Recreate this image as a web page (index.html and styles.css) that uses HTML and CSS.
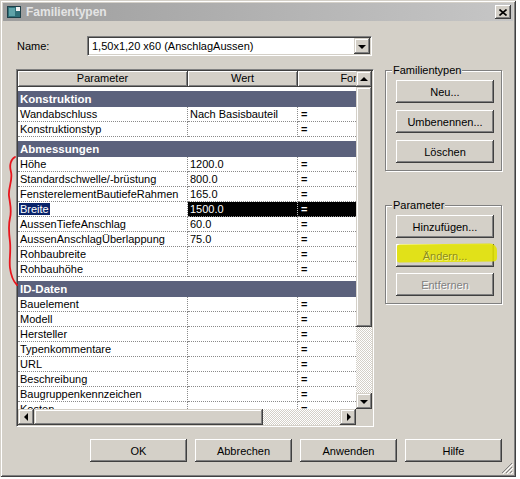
FILE: index.html
```html
<!DOCTYPE html>
<html lang="de">
<head>
    <meta charset="UTF-8">
    <title>Familientypen</title>
    <link rel="stylesheet" href="styles.css">
</head>
<body>
    <div class="window">
        <!-- Titelleiste -->
        <div class="titlebar">
            <svg class="app-icon" width="14" height="12" viewBox="0 0 14 12">
                <rect x="0.5" y="0.5" width="13" height="11" fill="#2f6f78" stroke="#1d3f48"/>
                <rect x="2" y="2" width="6" height="8" fill="#5fa3a8"/>
                <rect x="9" y="1" width="4" height="4" fill="#f2f2f2"/>
            </svg>
            <span class="title">Familientypen</span>
            <span class="close">
                <svg width="8" height="7" viewBox="0 0 8 7">
                    <path d="M0.5 0.5 L7.5 6.5 M7.5 0.5 L0.5 6.5" stroke="#000" stroke-width="1.6"/>
                </svg>
            </span>
        </div>

        <div class="content">
            <div class="name-row">
                <span class="name-label">Name:</span>
                <div class="combo">
                    <span class="combo-text">1,50x1,20 x60 (AnschlagAussen)</span>
                    <span class="sbtn combo-btn"><i class="tri tri-down"></i></span>
                </div>
            </div>

            <div class="main-row">
                <!-- Parametertabelle -->
                <div class="grid-frame">
                    <div class="sheet">
                        <div class="row head">
                            <div class="c c-param">Parameter</div>
                            <div class="c c-value">Wert</div>
                            <div class="c c-formula">Formel</div>
                        </div>

                        <div class="group">Konstruktion</div>
                        <div class="row"><div class="c c-param">Wandabschluss</div><div class="c c-value">Nach Basisbauteil</div><div class="c c-formula">=</div></div>
                        <div class="row"><div class="c c-param">Konstruktionstyp</div><div class="c c-value"></div><div class="c c-formula">=</div></div>

                        <div class="group">Abmessungen</div>
                        <div class="row"><div class="c c-param">Höhe</div><div class="c c-value">1200.0</div><div class="c c-formula">=</div></div>
                        <div class="row"><div class="c c-param">Standardschwelle/-brüstung</div><div class="c c-value">800.0</div><div class="c c-formula">=</div></div>
                        <div class="row"><div class="c c-param">FensterelementBautiefeRahmen</div><div class="c c-value">165.0</div><div class="c c-formula">=</div></div>
                        <div class="row selected"><div class="c c-param"><span class="sel-text">Breite</span></div><div class="c c-value">1500.0</div><div class="c c-formula">=</div></div>
                        <div class="row"><div class="c c-param">AussenTiefeAnschlag</div><div class="c c-value">60.0</div><div class="c c-formula">=</div></div>
                        <div class="row"><div class="c c-param">AussenAnschlagÜberlappung</div><div class="c c-value">75.0</div><div class="c c-formula">=</div></div>
                        <div class="row"><div class="c c-param">Rohbaubreite</div><div class="c c-value"></div><div class="c c-formula">=</div></div>
                        <div class="row"><div class="c c-param">Rohbauhöhe</div><div class="c c-value"></div><div class="c c-formula">=</div></div>

                        <div class="group">ID-Daten</div>
                        <div class="row"><div class="c c-param">Bauelement</div><div class="c c-value"></div><div class="c c-formula">=</div></div>
                        <div class="row"><div class="c c-param">Modell</div><div class="c c-value"></div><div class="c c-formula">=</div></div>
                        <div class="row"><div class="c c-param">Hersteller</div><div class="c c-value"></div><div class="c c-formula">=</div></div>
                        <div class="row"><div class="c c-param">Typenkommentare</div><div class="c c-value"></div><div class="c c-formula">=</div></div>
                        <div class="row"><div class="c c-param">URL</div><div class="c c-value"></div><div class="c c-formula">=</div></div>
                        <div class="row"><div class="c c-param">Beschreibung</div><div class="c c-value"></div><div class="c c-formula">=</div></div>
                        <div class="row"><div class="c c-param">Baugruppenkennzeichen</div><div class="c c-value"></div><div class="c c-formula">=</div></div>
                        <div class="row"><div class="c c-param">Kosten</div><div class="c c-value"></div><div class="c c-formula">=</div></div>
                    </div>

                    <div class="vscroll">
                        <span class="sbtn"><i class="tri tri-up"></i></span>
                        <span class="thumb thumb-v"></span>
                        <span class="track"></span>
                        <span class="sbtn"><i class="tri tri-down"></i></span>
                    </div>
                    <div class="hscroll">
                        <span class="sbtn"><i class="tri tri-left"></i></span>
                        <span class="thumb thumb-h"></span>
                        <span class="track"></span>
                        <span class="sbtn"><i class="tri tri-right"></i></span>
                    </div>
                    <div class="corner"></div>
                </div>

                <!-- Schaltflächen rechts -->
                <div class="side">
                    <fieldset class="box">
                        <legend>Familientypen</legend>
                        <span class="btn">Neu...</span>
                        <span class="btn">Umbenennen...</span>
                        <span class="btn">Löschen</span>
                    </fieldset>
                    <fieldset class="box box-param">
                        <legend>Parameter</legend>
                        <span class="btn">Hinzufügen...</span>
                        <span class="btn disabled marked">Ändern...</span>
                        <span class="btn disabled">Entfernen</span>
                    </fieldset>
                </div>
            </div>

            <div class="actions">
                <span class="btn btn-wide">OK</span>
                <span class="btn btn-wide">Abbrechen</span>
                <span class="btn btn-wide">Anwenden</span>
                <span class="btn btn-wide">Hilfe</span>
            </div>
        </div>

        <!-- rote Markierung -->
        <svg class="scribble" width="26" height="140" viewBox="0 150 26 140">
            <path d="M15 157 C11 159 9 165 11 172 C13 180 8 188 9 196 C10 204 12 210 10 218 C8 226 9 234 10 242 C11 252 9 260 10 268 C11 276 13 281 17 285"
                  fill="none" stroke="#e8141c" stroke-width="1.8" stroke-linecap="round"/>
        </svg>

        <svg class="grip" width="12" height="12" viewBox="0 0 12 12">
            <path d="M11 1 L1 11 M11 5 L5 11 M11 9 L9 11" stroke="#808080" stroke-width="1"/>
            <path d="M12 2 L2 12 M12 6 L6 12 M12 10 L10 12" stroke="#fff" stroke-width="1"/>
        </svg>
    </div>
</body>
</html>
```

FILE: styles.css
```css
body {
    margin: 0;
    background: #fff;
    font-family: 'Liberation Sans', Arial, sans-serif;
    font-size: 11px;
    color: #000;
}

.window {
    position: relative;
    width: 516px;
    height: 477px;
    box-sizing: border-box;
    padding: 3px;
    background: #d4d0c8;
    box-shadow: inset 1px 1px #d4d0c8, inset -1px -1px #404040,
                inset 2px 2px #fff, inset -2px -2px #808080;
}

/* Titelleiste */
.titlebar {
    height: 18px;
    display: flex;
    align-items: center;
    padding: 0 2px 0 4px;
    background: linear-gradient(to right, #9d9d9d, #c6c6c6);
}

.app-icon {
    margin-right: 5px;
}

.title {
    flex: 1;
    font-size: 12px;
    font-weight: bold;
    color: #e4e4e4;
}

.close {
    width: 16px;
    height: 14px;
    display: flex;
    align-items: center;
    justify-content: center;
    background: #d4d0c8;
    box-shadow: inset -1px -1px #404040, inset 1px 1px #fff,
                inset -2px -2px #808080;
}

.content {
    padding: 15px 11px 0 13px;
}

/* Name */
.name-row {
    display: flex;
    align-items: center;
    height: 20px;
}

.name-label {
    width: 70px;
    padding-left: 1px;
}

.combo {
    width: 285px;
    height: 20px;
    box-sizing: border-box;
    display: flex;
    align-items: center;
    background: #fff;
    border: 1px solid;
    border-color: #808080 #fff #fff #808080;
    box-shadow: inset 1px 1px #404040, inset -1px -1px #d4d0c8;
}

.combo-text {
    flex: 1;
    padding-left: 4px;
}

.combo-btn {
    margin-right: 1px;
}

.main-row {
    display: flex;
    gap: 11px;
    margin-top: 13px;
}

/* Tabelle */
.grid-frame {
    width: 358px;
    height: 358px;
    box-sizing: border-box;
    display: grid;
    grid-template-columns: 338px 16px;
    grid-template-rows: 338px 16px;
    border: 1px solid;
    border-color: #808080 #fff #fff #808080;
    padding: 1px;
    background: #d4d0c8;
    box-shadow: inset 1px 1px #404040;
}

.sheet {
    overflow: hidden;
    background: #fff;
}

.row {
    display: flex;
    height: 15px;
}

.c {
    flex: none;
    box-sizing: border-box;
    height: 15px;
    line-height: 14px;
    padding-left: 2px;
    white-space: nowrap;
    overflow: hidden;
    border-right: 1px dotted #8a8a8a;
    border-bottom: 1px dotted #8a8a8a;
}

.c-param { width: 170px; }
.c-value { width: 110px; }
.c-formula { width: 120px; font-weight: bold; padding-left: 3px; }

.row.head {
    height: 16px;
}

.head .c {
    height: 16px;
    line-height: 15px;
    text-align: center;
    font-weight: normal;
    padding: 0;
    background: #d4d0c8;
    border-right: 1px solid #404040;
    border-bottom: 1px solid #404040;
    box-shadow: inset 1px 1px #fff, inset -1px -1px #808080;
}

.group {
    margin-top: 4px;
    height: 16px;
    line-height: 16px;
    padding-left: 2px;
    background: #5b617c;
    color: #fff;
    font-weight: bold;
    font-size: 11.5px;
}

.selected .c-value,
.selected .c-formula {
    background: #000;
    color: #fff;
    border-right-color: #c0c0c0;
}

.sel-text {
    background: #0a246a;
    color: #fff;
    padding: 0 1px;
    margin-left: -1px;
}

/* Scrollleisten */
.vscroll,
.hscroll {
    display: flex;
}

.vscroll { flex-direction: column; }

.track {
    flex: 1;
    background: repeating-conic-gradient(#d4d0c8 0 25%, #fff 0 50%) 0 0 / 2px 2px;
}

.sbtn,
.thumb {
    flex: none;
    width: 16px;
    height: 16px;
    box-sizing: border-box;
    display: flex;
    align-items: center;
    justify-content: center;
    background: #d4d0c8;
    box-shadow: inset -1px -1px #404040, inset 1px 1px #d4d0c8,
                inset -2px -2px #808080, inset 2px 2px #fff;
}

.thumb-v { height: 240px; }
.thumb-h { width: 229px; }

.corner {
    background: #d4d0c8;
}

.tri {
    width: 0;
    height: 0;
    border: 4px solid transparent;
}

.tri-up { border-bottom-color: #000; border-top-width: 0; margin-top: -1px; }
.tri-down { border-top-color: #000; border-bottom-width: 0; margin-top: 1px; }
.tri-left { border-right-color: #000; border-left-width: 0; margin-left: -1px; }
.tri-right { border-left-color: #000; border-right-width: 0; margin-left: 1px; }

/* Gruppen rechts */
.side {
    width: 117px;
    display: flex;
    flex-direction: column;
    margin-top: -5px;
}

.box {
    margin: 0;
    min-width: 0;
    padding: 3px 7px 7px 10px;
    display: flex;
    flex-direction: column;
    gap: 7px;
    border: 1px solid #808080;
    box-shadow: inset 1px 1px #fff, 1px 1px #fff;
}

.box legend {
    margin-left: -4px;
    padding: 0 1px;
    line-height: 13px;
    background: #d4d0c8;
}

.box-param {
    margin-top: 28px;
    gap: 6px;
}

.btn {
    position: relative;
    width: 98px;
    height: 23px;
    box-sizing: border-box;
    display: flex;
    align-items: center;
    justify-content: center;
    background: #d4d0c8;
    box-shadow: inset -1px -1px #404040, inset 1px 1px #fff,
                inset -2px -2px #808080, inset 2px 2px #d4d0c8;
}

.btn.disabled {
    color: #808080;
    text-shadow: 1px 1px #fff;
}

/* gelber Textmarker */
.btn.marked {
    z-index: 0;
    color: #8c8c1a;
    text-shadow: 1px 1px rgba(255, 255, 160, 0.7);
}

.btn.marked::after {
    content: '';
    position: absolute;
    z-index: -1;
    left: 1px;
    right: -3px;
    top: 0;
    bottom: 5px;
    background: rgba(226, 226, 0, 0.88);
    border-radius: 3px 7px 4px 2px;
    transform: rotate(-0.6deg);
}

.actions {
    display: flex;
    justify-content: flex-end;
    gap: 8px;
    margin-top: 12px;
}

.btn-wide {
    width: 97px;
}

.scribble {
    position: absolute;
    left: 0;
    top: 150px;
}

.grip {
    position: absolute;
    right: 3px;
    bottom: 3px;
}
```
